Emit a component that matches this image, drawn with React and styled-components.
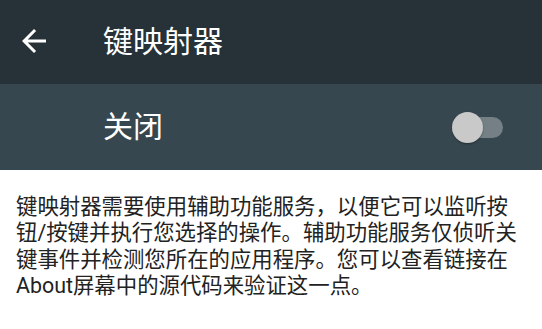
import React, { useState } from "react";
import styled, { createGlobalStyle } from "styled-components";

const GlobalStyle = createGlobalStyle`
  html, body {
    margin: 0;
    padding: 0;
    background: #ffffff;
  }
  body {
    font-family: "Roboto", "Noto Sans CJK SC", sans-serif;
  }
`;

export const Page = styled.div`
  width: 542px;
  height: 329px;
  display: flex;
  flex-direction: column;
  background-color: #ffffff;
  overflow: hidden;
`;

export const Toolbar = styled.header`
  height: 84px;
  background-color: #263238;
  display: flex;
  flex-direction: row;
  align-items: center;
  padding-left: 16px;
`;

export const BackButton = styled.button`
  width: 36px;
  height: 36px;
  padding: 0;
  border: none;
  background: none;
  display: flex;
  align-items: center;
  justify-content: center;
  color: #ffffff;
  margin-top: -2px;
`;

export const Title = styled.h1`
  margin: 0 0 0 51px;
  font-size: 30px;
  font-weight: 400;
  color: #ffffff;
  line-height: 1;
`;

export const SwitchBar = styled.div`
  height: 86px;
  background-color: #37474f;
  display: flex;
  flex-direction: row;
  align-items: center;
  justify-content: space-between;
  padding-left: 103px;
  padding-right: 39px;
`;

export const SwitchLabel = styled.span`
  font-size: 30px;
  color: #ffffff;
  line-height: 1;
`;

export const Track = styled.div`
  position: relative;
  width: 51px;
  height: 21px;
  border-radius: 11px;
  background-color: ${(props) => (props.on ? "#80cbc4" : "#748086")};
  cursor: pointer;
`;

export const Thumb = styled.div`
  position: absolute;
  top: -5px;
  left: ${(props) => (props.on ? "21px" : "0px")};
  width: 31px;
  height: 31px;
  border-radius: 50%;
  background-color: ${(props) => (props.on ? "#009688" : "#c9c9c9")};
  box-shadow: 0 1px 2px rgba(0, 0, 0, 0.35);
`;

export const Description = styled.p`
  margin: 0;
  padding: 24px 16px 0 16px;
  font-size: 21.4px;
  line-height: 26.3px;
  color: #222222;
`;

function BackArrow() {
  return (
    <svg width="36" height="36" viewBox="0 0 24 24" fill="currentColor">
      <path d="M20 11H7.83l5.59-5.59L12 4l-8 8 8 8 1.41-1.41L7.83 13H20v-2z" />
    </svg>
  );
}

export default function App() {
  const [on, setOn] = useState(false);
  return (
    <Page>
      <GlobalStyle />
      <Toolbar>
        <BackButton>
          <BackArrow />
        </BackButton>
        <Title>键映射器</Title>
      </Toolbar>
      <SwitchBar>
        <SwitchLabel>{on ? "开启" : "关闭"}</SwitchLabel>
        <Track on={on} onClick={() => setOn(!on)}>
          <Thumb on={on} />
        </Track>
      </SwitchBar>
      <Description>
        键映射器需要使用辅助功能服务，以便它可以监听按钮/按键并执行您选择的操作。辅助功能服务仅侦听关键事件并检测您所在的应用程序。您可以查看链接在About屏幕中的源代码来验证这一点。
      </Description>
    </Page>
  );
}
